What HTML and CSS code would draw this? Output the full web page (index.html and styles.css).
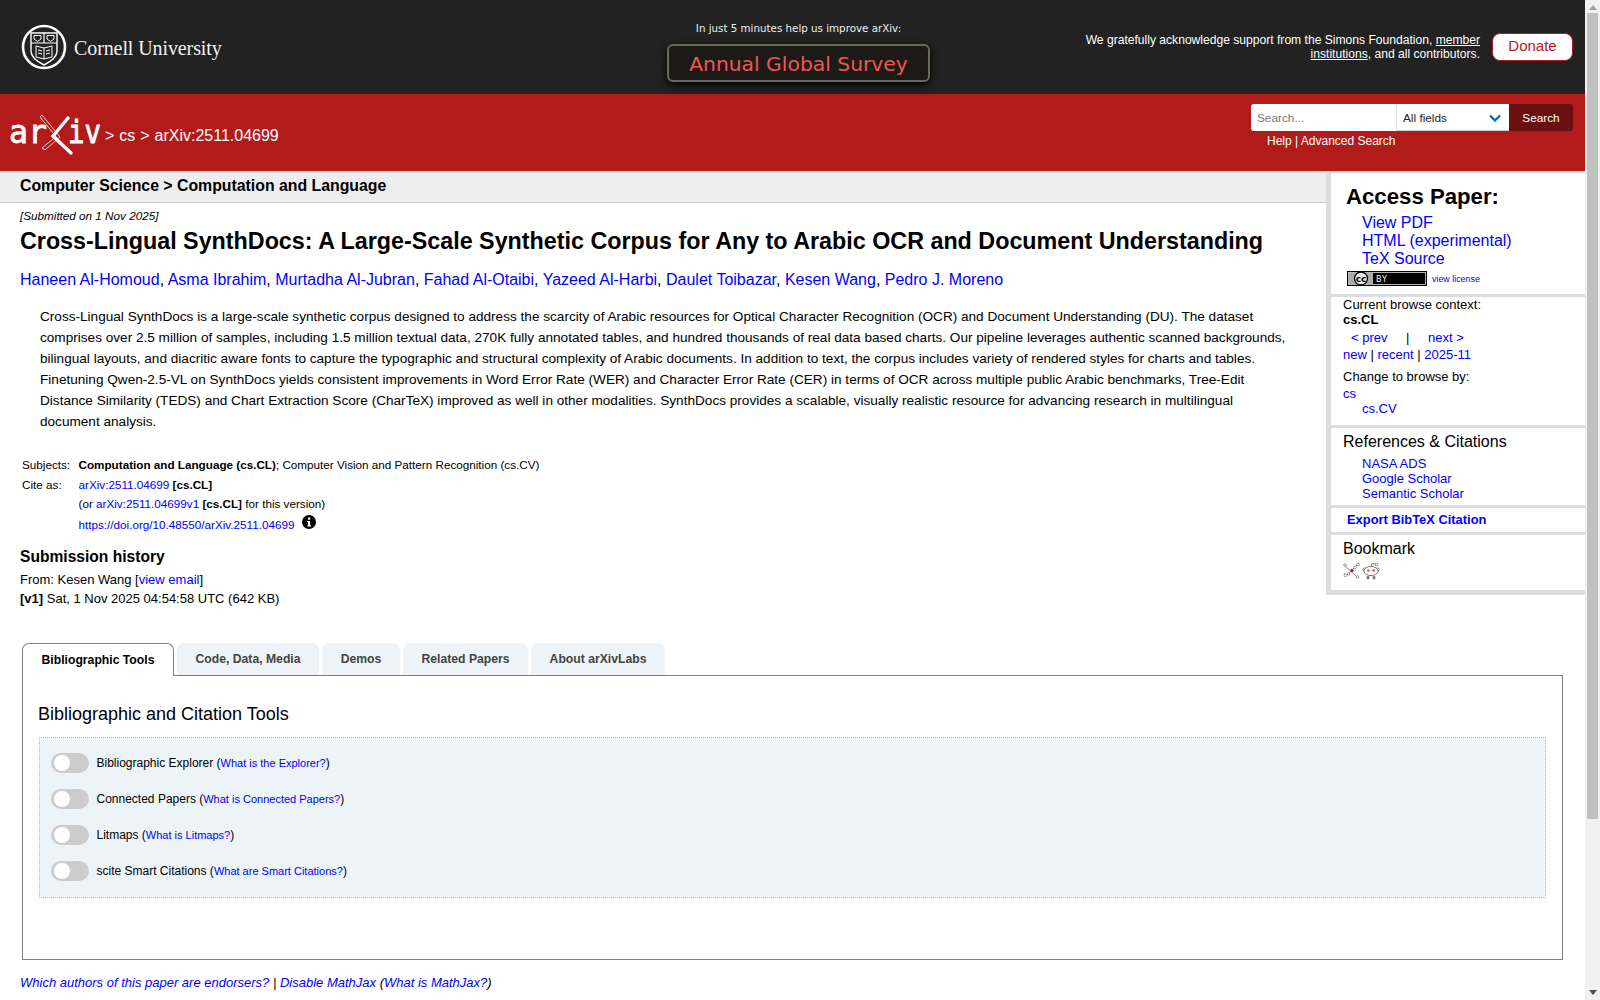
FILE: index.html
```html
<!DOCTYPE html>
<html lang="en">
<head>
<meta charset="utf-8">
<title>Cross-Lingual SynthDocs</title>
<link rel="stylesheet" href="styles.css">
</head>
<body>
<header class="top">
  <a class="cornell" href="#">
    <svg class="cornell-seal" width="46" height="46" viewBox="0 0 46 46" aria-hidden="true">
      <circle cx="23" cy="23" r="21" fill="none" stroke="#fff" stroke-width="2.600"/>
      <path d="M10 9H36V27C36 34 29 38 23 41C17 38 10 34 10 27Z" fill="none" stroke="#fff" stroke-width="1.4"/>
      <path d="M10 19H36M23 9V19" stroke="#fff" stroke-width="1.2"/>
      <path d="M13 11.500H20V15L16.5 17.500L13 15ZM26 11.500H33V15L29.500 17.500L26 15Z" fill="none" stroke="#fff" stroke-width="1"/>
      <path d="M15 22L23 24L31 22V33L23 35L15 33ZM23 24V35M17 26L21 27M17 29L21 30M25 27L29 26M25 30L29 29" fill="none" stroke="#fff" stroke-width="1"/>
    </svg>
    <span class="cornell-name">Cornell University</span>
  </a>
  <div class="survey">
    <p class="survey-note">In just 5 minutes help us improve arXiv:</p>
    <a class="survey-btn" href="#">Annual Global Survey</a>
  </div>
  <div class="support">
    <p class="support-text">We gratefully acknowledge support from the Simons Foundation, <a href="#">member</a> <a href="#">institutions</a>, and all contributors.</p>
    <a class="donate" href="#">Donate</a>
  </div>
</header>

<div class="redbar">
  <div class="crumb">
    <svg class="arxiv-logo" width="98" height="44" viewBox="0 0 98 44" role="img" aria-label="arXiv">
      <text x="0" y="31" class="logo-letters" textLength="38" lengthAdjust="spacingAndGlyphs">ar</text>
      <text x="59" y="31" class="logo-letters" textLength="33" lengthAdjust="spacingAndGlyphs">iv</text>
      <path d="M33 3L51 25L36 38L33 36L47 24.500L31 5Z" fill="none" stroke="#fff" stroke-width="0.8"/>
      <path d="M59 6L44 24L62 41" fill="none" stroke="#fff" stroke-width="3.4" stroke-linecap="round"/>
    </svg>
    <span class="crumb-text">&gt; cs &gt; arXiv:2511.04699</span>
  </div>
  <div class="searchbox">
    <form class="search-row">
      <input class="search-input" type="text" placeholder="Search...">
      <div class="search-select">All fields
        <svg width="12" height="8" viewBox="0 0 12 8" aria-hidden="true"><path d="M1 1.500L6 6.500L11 1.500" fill="none" stroke="#0068ac" stroke-width="2.200"/></svg>
      </div>
      <button class="search-btn" type="button">Search</button>
    </form>
    <p class="search-help"><a href="#">Help</a> | <a href="#">Advanced Search</a></p>
  </div>
</div>

<div class="layout">
  <main class="paper">
    <div class="subject-bar">Computer Science &gt; Computation and Language</div>
    <div class="paper-body">
      <p class="dateline">[Submitted on 1 Nov 2025]</p>
      <h1 class="title">Cross-Lingual SynthDocs: A Large-Scale Synthetic Corpus for Any to Arabic OCR and Document Understanding</h1>
      <p class="authors"><a href="#">Haneen Al-Homoud</a>, <a href="#">Asma Ibrahim</a>, <a href="#">Murtadha Al-Jubran</a>, <a href="#">Fahad Al-Otaibi</a>, <a href="#">Yazeed Al-Harbi</a>, <a href="#">Daulet Toibazar</a>, <a href="#">Kesen Wang</a>, <a href="#">Pedro J. Moreno</a></p>
      <blockquote class="abstract">Cross-Lingual SynthDocs is a large-scale synthetic corpus designed to address the scarcity of Arabic resources for Optical Character Recognition (OCR) and Document Understanding (DU). The dataset comprises over 2.5 million of samples, including 1.5 million textual data, 270K fully annotated tables, and hundred thousands of real data based charts. Our pipeline leverages authentic scanned backgrounds, bilingual layouts, and diacritic aware fonts to capture the typographic and structural complexity of Arabic documents. In addition to text, the corpus includes variety of rendered styles for charts and tables. Finetuning Qwen-2.5-VL on SynthDocs yields consistent improvements in Word Error Rate (WER) and Character Error Rate (CER) in terms of OCR across multiple public Arabic benchmarks, Tree-Edit Distance Similarity (TEDS) and Chart Extraction Score (CharTeX) improved as well in other modalities. SynthDocs provides a scalable, visually realistic resource for advancing research in multilingual document analysis.</blockquote>
      <div class="meta">
        <div class="meta-label">Subjects:</div>
        <div class="meta-value"><b>Computation and Language (cs.CL)</b>; Computer Vision and Pattern Recognition (cs.CV)</div>
        <div class="meta-label">Cite as:</div>
        <div class="meta-value cite">
          <div><a href="#">arXiv:2511.04699</a> <b>[cs.CL]</b></div>
          <div>(or <a href="#">arXiv:2511.04699v1</a> <b>[cs.CL]</b> for this version)</div>
          <div class="doi"><a href="#">https://doi.org/10.48550/arXiv.2511.04699</a>
            <svg class="info" width="14" height="14" viewBox="0 0 14 14" aria-hidden="true"><circle cx="7" cy="7" r="7" fill="#000"/><rect x="6" y="2.500" width="2.200" height="2.200" fill="#fff"/><path d="M5 6H8.200V10.500H9.200V11.500H5V10.500H6V7H5Z" fill="#fff"/></svg>
          </div>
        </div>
      </div>
      <h2 class="history-title">Submission history</h2>
      <p class="history">From: Kesen Wang [<a href="#">view email</a>]<br><b>[v1]</b> Sat, 1 Nov 2025 04:54:58 UTC (642 KB)</p>
    </div>
  </main>

  <aside class="side">
    <section class="side-sec access">
      <h2 class="access-title">Access Paper:</h2>
      <ul class="access-links">
        <li><a href="#">View PDF</a></li>
        <li><a href="#">HTML (experimental)</a></li>
        <li><a href="#">TeX Source</a></li>
      </ul>
      <div class="license">
        <svg width="80" height="15" viewBox="0 0 80 15" aria-hidden="true">
          <rect x="0.500" y="0.500" width="79" height="14" fill="#000" stroke="#000"/>
          <rect x="1.500" y="1.500" width="77" height="12" fill="#000" stroke="#fff" stroke-width="0.700"/>
          <rect x="2" y="2" width="24" height="11" fill="#aaa"/>
          <circle cx="14" cy="7.500" r="6.500" fill="#e8e8e8" stroke="#000" stroke-width="1.300"/>
          <text x="14" y="10.500" text-anchor="middle" class="cc-c">cc</text>
          <text x="29" y="11" class="cc-by">BY</text>
        </svg>
        <a href="#">view license</a>
      </div>
    </section>
    <section class="side-sec browse">
      <div>Current browse context:</div>
      <div class="browse-cat">cs.CL</div>
      <div class="browse-nav"><a class="prev" href="#">&lt; prev</a><span class="pipe">|</span><a href="#">next &gt;</a></div>
      <div class="browse-lists"><a href="#">new</a> | <a href="#">recent</a> | <a href="#">2025-11</a></div>
      <div class="change">Change to browse by:</div>
      <div class="browse-cs"><a href="#">cs</a></div>
      <div class="browse-cv"><a href="#">cs.CV</a></div>
    </section>
    <section class="side-sec refs">
      <h3 class="side-h">References &amp; Citations</h3>
      <ul class="ref-links">
        <li><a href="#">NASA ADS</a></li>
        <li><a href="#">Google Scholar</a></li>
        <li><a href="#">Semantic Scholar</a></li>
      </ul>
    </section>
    <section class="side-sec bibtex"><a href="#">Export BibTeX Citation</a></section>
    <section class="side-sec bookmark">
      <h3 class="side-h">Bookmark</h3>
      <div class="bm-icons">
        <svg width="17" height="17" viewBox="0 0 17 17" aria-hidden="true">
          <path d="M1 3L14 15M15 2L3 14M3 14L1 11" stroke="#777" stroke-width="0.900" fill="none"/>
          <circle cx="2" cy="3" r="1.300" fill="#fff" stroke="#777" stroke-width="0.700"/>
          <circle cx="15" cy="2.500" r="1.400" fill="#fff" stroke="#777" stroke-width="0.700"/>
          <circle cx="12" cy="5.500" r="1.400" fill="#fff" stroke="#777" stroke-width="0.700"/>
          <circle cx="2.500" cy="13.500" r="1.400" fill="#fff" stroke="#777" stroke-width="0.700"/>
          <circle cx="5.500" cy="12" r="1.200" fill="#fff" stroke="#777" stroke-width="0.700"/>
          <circle cx="14.500" cy="15" r="1.300" fill="#fff" stroke="#777" stroke-width="0.700"/>
          <circle cx="9" cy="8.500" r="1.700" fill="#a3195b"/>
        </svg>
        <svg width="18" height="18" viewBox="0 0 18 18" aria-hidden="true">
          <path d="M9 5L10 1.500L13.500 2.300" fill="none" stroke="#666" stroke-width="0.900"/>
          <circle cx="14.500" cy="2.500" r="1.300" fill="#fff" stroke="#666" stroke-width="0.800"/>
          <circle cx="2.300" cy="7.500" r="1.500" fill="#fff" stroke="#666" stroke-width="0.800"/>
          <circle cx="15.700" cy="7.500" r="1.500" fill="#fff" stroke="#666" stroke-width="0.800"/>
          <ellipse cx="9" cy="9" rx="7" ry="4.600" fill="#fff" stroke="#666" stroke-width="0.900"/>
          <circle cx="6.300" cy="8.500" r="1.300" fill="#f44"/>
          <circle cx="11.700" cy="8.500" r="1.300" fill="#f44"/>
          <path d="M5 14V17H7V14M11 14V17H13V14" fill="#888" stroke="#666" stroke-width="0.500"/>
        </svg>
      </div>
    </section>
  </aside>
</div>

<section class="labs">
  <nav class="tabs">
    <a class="tab active" href="#">Bibliographic Tools</a>
    <a class="tab" href="#">Code, Data, Media</a>
    <a class="tab" href="#">Demos</a>
    <a class="tab" href="#">Related Papers</a>
    <a class="tab" href="#">About arXivLabs</a>
  </nav>
  <div class="panel">
    <h2 class="panel-title">Bibliographic and Citation Tools</h2>
    <div class="tool-box">
      <div class="tool"><span class="toggle"><span class="knob"></span></span><span>Bibliographic Explorer (<a href="#">What is the Explorer?</a>)</span></div>
      <div class="tool"><span class="toggle"><span class="knob"></span></span><span>Connected Papers (<a href="#">What is Connected Papers?</a>)</span></div>
      <div class="tool"><span class="toggle"><span class="knob"></span></span><span>Litmaps (<a href="#">What is Litmaps?</a>)</span></div>
      <div class="tool"><span class="toggle"><span class="knob"></span></span><span>scite Smart Citations (<a href="#">What are Smart Citations?</a>)</span></div>
    </div>
  </div>
</section>

<p class="endnote"><a href="#">Which authors of this paper are endorsers?</a> | <a href="#">Disable MathJax</a> (<a href="#">What is MathJax?</a>)</p>
<div class="below-fold"></div>

<div class="scrollbar" aria-hidden="true">
  <span class="sb-up"></span>
  <span class="sb-thumb"></span>
  <span class="sb-down"></span>
</div>
</body>
</html>
```

FILE: styles.css
```css
* { box-sizing: border-box; }
body { margin: 0 15px 0 0; background: #fff; color: #000; font-family: "Liberation Sans", Arial, sans-serif; font-size: 13px; }
a { color: #00f; text-decoration: none; }
p, h1, h2, h3, ul, blockquote { margin: 0; padding: 0; }
ul { list-style: none; }

.scrollbar { position: fixed; top: 0; right: 0; bottom: 0; width: 15px; background: #f1f1f1; display: flex; flex-direction: column; align-items: center; }
.sb-up { width: 0; height: 0; margin-top: 5px; border: 4px solid transparent; border-top: 0; border-bottom: 5px solid #a3a3a3; }
.sb-thumb { width: 11px; height: 806px; margin-top: 3px; background: #c1c1c1; }
.sb-down { width: 0; height: 0; margin-top: auto; margin-bottom: 5px; border: 4px solid transparent; border-bottom: 0; border-top: 5px solid #505050; }

.top { height: 94px; background: #222; color: #fff; display: flex; align-items: center; }
.cornell { display: flex; align-items: center; width: 667px; padding: 0 0 0 21px; color: #fff; }
.cornell-name { font-family: "Liberation Serif", serif; font-size: 20px; letter-spacing: -0.1px; margin: 2px 0 0 7px; color: #f2f2f2; }
.survey { width: 263px; text-align: center; padding-top: 10px; }
.survey-note { font-family: "DejaVu Sans", sans-serif; font-size: 10.300px; line-height: 13px; color: #eee; margin-bottom: 9px; }
.survey-btn { display: block; height: 38px; line-height: 36px; background: #1c1a17; border: 2px solid #6e685c; border-radius: 6px; color: #f05555; font-family: "DejaVu Sans", sans-serif; font-size: 20.300px; box-shadow: 0 3px 8px #000; }
.support { flex: 1; display: flex; align-items: center; justify-content: flex-end; padding-right: 12px; }
.support-text { width: 400px; text-align: right; font-size: 12.100px; line-height: 14px; margin-right: 12px; }
.support-text a { color: #fff; text-decoration: underline; }
.donate { width: 81px; height: 28px; line-height: 24px; text-align: center; background: #fff; color: #b31b1b; border: 1px solid #b31b1b; border-radius: 8px; font-size: 15px; }

.redbar { height: 79px; background: #b31b1b; border-bottom: 2px solid #ddd; color: #fff; display: flex; justify-content: space-between; }
.crumb { display: flex; align-items: flex-start; padding: 18px 0 0 9px; }
.arxiv-logo { display: block; }
.logo-letters { font-family: "DejaVu Sans Mono", monospace; font-size: 32px; fill: #fff; stroke: #fff; stroke-width: 0.800px; }
.crumb-text { font-size: 16px; word-spacing: 0.500px; margin: 15px 0 0 -2px; }
.searchbox { width: 334px; padding-top: 10px; padding-right: 12px; }
.search-row { display: flex; height: 27px; }
.search-input { width: 145px; height: 27px; border: 0; border-radius: 3px 0 0 3px; padding: 0 6px; font: 11.800px "Liberation Sans", sans-serif; outline: 0; background: #fff; }
.search-input::placeholder { color: #777; }
.search-select { width: 113px; display: flex; align-items: center; justify-content: space-between; padding: 2px 8px 0 6px; background: #fff; color: #222; font-size: 11.800px; border-bottom: 1px solid #ccc; border-left: 1px solid #ddd; }
.search-btn { width: 64px; border: 0; background: #6b1010; color: #fff; font: 11.800px "Liberation Sans", sans-serif; border-radius: 0 3px 3px 0; padding-top: 2px; }
.search-help { font-size: 12px; padding: 3px 0 0 16px; color: #fff; }
.search-help a { color: #fff; }

.layout { display: flex; align-items: flex-start; }
.paper { width: 1326px; }
.subject-bar { height: 30px; background: #eee; border-bottom: 1px solid #ccc; padding-left: 20px; font-weight: 700; font-size: 15.840px; line-height: 26px; }
.paper-body { padding: 0 0 0 20px; }
.dateline { font-size: 11.700px; font-style: italic; margin-top: 6px; line-height: 13px; }
.title { font-size: 23.300px; line-height: 26px; font-weight: 700; margin-top: 6px; }
.authors { font-size: 16px; line-height: 20px; margin-top: 16px; }
.abstract { font-size: 13.600px; line-height: 21px; margin: 16px 35px 0 20px; }
.meta { display: grid; grid-template-columns: 56.500px 1fr; font-size: 11.700px; margin: 26px 0 0 2px; line-height: 14px; row-gap: 6px; }
.cite div { margin-bottom: 5px; }
.cite .doi { margin: 5px 0 0; display: flex; align-items: flex-start; gap: 8px; }
.doi a { padding-top: 2px; }
.info { margin-top: -1px; }
.history-title { font-size: 15.600px; line-height: 18px; margin-top: 16px; }
.history { line-height: 19px; margin-top: 4px; }

.side { width: 259px; border-left: 5px solid #ddd; border-bottom: 5px solid #ddd; }
.side-sec { border-bottom: 3px solid #ddd; padding-left: 12px; }
.side-sec:last-child { border-bottom: 0; }
.access { height: 124px; padding: 11px 0 0 15px; }
.access-title { font-size: 22.200px; line-height: 26px; }
.access-links { font-size: 16px; line-height: 18px; padding: 4px 0 0 16px; }
.license { display: flex; align-items: center; gap: 5px; margin: 3px 0 0 1px; font-size: 8.900px; }
.license svg { display: block; }
.cc-c { font: bold 9px "DejaVu Sans", sans-serif; fill: #000; }
.cc-by { font: 8px "DejaVu Sans", sans-serif; fill: #fff; letter-spacing: 1px; }
.browse { height: 131px; line-height: 16px; padding-top: 0; }
.browse-cat { font-weight: 700; margin-top: -1px; }
.browse-nav { margin-top: 2px; padding-left: 8px; display: flex; }
.browse-lists { margin-top: 1px; }
.prev { width: 55px; }
.pipe { width: 22px; }
.change { margin-top: 6px; }
.browse-cs { margin-top: 1px; }
.browse-cv { padding-left: 19px; line-height: 14px; }
.refs { height: 80px; padding-top: 5px; }
.side-h { font-weight: 400; font-size: 16px; line-height: 18px; }
.ref-links { padding: 5px 0 0 19px; line-height: 15px; }
.bibtex { height: 27px; padding: 4px 0 0 16px; font-weight: 700; font-size: 12.900px; line-height: 15px; }
.bookmark { height: 55px; padding-top: 5px; }
.bm-icons { display: flex; gap: 2px; margin-top: 4px; }

.labs { margin: 35px 0 0 22px; width: 1541px; }
.tabs { display: flex; gap: 3px; height: 33px; }
.tab { width: 142px; height: 32px; background: #edf3f7; border-radius: 7px 7px 0 0; color: #444; font-weight: 700; font-size: 12.200px; text-align: center; line-height: 33px; }
.tab:nth-child(3) { width: 78px; }
.tab:nth-child(4) { width: 125px; }
.tab:nth-child(5) { width: 134px; }
.tab.active { width: 152px; height: 33px; background: #fff; border: 1px solid #808080; border-bottom: 0; color: #000; line-height: 33px; position: relative; z-index: 1; }
.panel { height: 285px; border: 1px solid #808080; margin-top: -1px; padding: 27px 16px 0; }
.panel-title { font-weight: 400; font-size: 18px; line-height: 22px; margin-left: -1px; }
.tool-box { margin-top: 12px; height: 161px; background: #edf4f8; border: 1px dotted #a9bcc8; padding: 15px 11px; display: flex; flex-direction: column; gap: 16px; font-size: 12px; }
.tool { display: flex; align-items: center; height: 20px; gap: 7.500px; }
.tool a { font-size: 11px; }
.toggle { display: block; width: 38px; height: 20px; background: #ccc; border-radius: 10px; padding: 2px 3px; }
.knob { display: block; width: 16px; height: 16px; background: #fff; border-radius: 50%; }
.endnote { margin: 15px 0 0 20px; font-size: 13px; font-style: italic; line-height: 16px; }
.below-fold { height: 208px; }
```
